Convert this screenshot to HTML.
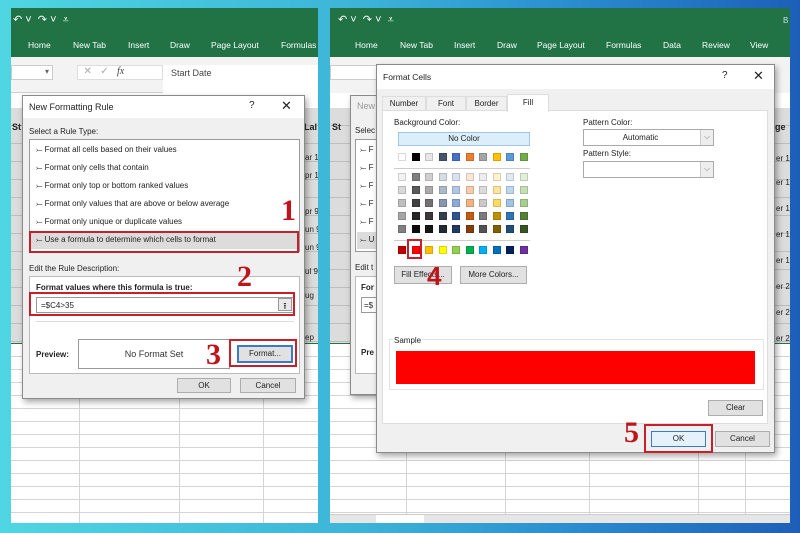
<!DOCTYPE html>
<html><head><meta charset="utf-8"><style>
*{margin:0;padding:0;box-sizing:border-box}
body{width:800px;height:533px;overflow:hidden;position:relative;font-family:"Liberation Sans",sans-serif;font-size:8px;color:#222;
background:linear-gradient(90deg,#4fd6e2 0%,#3cb4d8 45%,#2b8fd0 70%,#1d5fb8 100%)}
.a{position:absolute;white-space:nowrap}
.rib{background:#217346;color:#fff}
.tabs span{position:absolute;top:40px;font-size:8.5px;color:#fff}
.grid{background-image:repeating-linear-gradient(180deg,transparent 0 12px,#d4d4d4 12px 13px)}
.dlg{background:#f0f0f0;border:1px solid #8a8a8a;box-shadow:2px 3px 6px rgba(0,0,0,.35)}
.btn{position:absolute;background:#e1e1e1;border:1px solid #adadad;text-align:center;font-size:8px;line-height:14px;white-space:nowrap}
.red{position:absolute;border:2px solid #c8202a}
.num{position:absolute;font-family:"Liberation Serif",serif;font-weight:bold;color:#c0141c;font-size:30px;line-height:30px}
.li{position:absolute;left:6px;font-size:8px;white-space:nowrap}
.sw{position:absolute;width:8px;height:8px;border:1px solid rgba(0,0,0,.15)}
</style></head><body>

<!-- LEFT PANEL -->
<div class="a" style="left:11px;top:8px;width:307px;height:515px;background:#fff;overflow:hidden">
  <div class="a rib" style="left:0;top:0;width:307px;height:49px">
    <div class="a" style="left:2px;top:5px;font-size:11px">↶ ˅ &nbsp;↷ ˅ &nbsp;⩡</div>
    <div class="tabs"><span style="left:17px;top:32px">Home</span><span style="left:62px;top:32px">New Tab</span><span style="left:117px;top:32px">Insert</span><span style="left:159px;top:32px">Draw</span><span style="left:200px;top:32px">Page Layout</span><span style="left:270px;top:32px">Formulas</span></div>
  </div>
  <div class="a" style="left:0;top:49px;width:307px;height:36px;background:#f3f3f3;border-bottom:1px solid #d0d0d0"></div>
  <div class="a" style="left:0;top:57px;width:42px;height:15px;background:#fff;border:1px solid #ccc"><span style="position:absolute;right:3px;top:1px;color:#666">▾</span></div>
  <div class="a" style="left:66px;top:57px;width:86px;height:15px;background:#fff;border:1px solid #ddd;color:#aaa;font-size:10px">&nbsp;&nbsp;✕ &nbsp; ✓ &nbsp;&nbsp;<i style="color:#444;font-family:'Liberation Serif'">fx</i></div>
  <div class="a" style="left:152px;top:57px;width:155px;height:28px;background:#fff;font-size:9px;padding:3px 8px;color:#444">Start Date</div>
  <div class="a" style="left:0;top:100px;width:307px;height:235px;background:#dcdcdc" ></div>
  <div class="a" style="left:0;top:100px;width:307px;height:235px;background-image:repeating-linear-gradient(180deg,transparent 0 17px,#bdbdbd 17px 18px)"></div>
  <div class="a" style="left:1px;top:114px;font-weight:bold;font-size:9px">St</div>
  <div class="a" style="left:293px;top:114px;font-weight:bold;font-size:9px">Lal</div>
  <div class="a" style="left:294px;top:145px">ar 1</div><div class="a" style="left:294px;top:163px">pr 1</div><div class="a" style="left:294px;top:199px">pr 9</div><div class="a" style="left:294px;top:217px">un 9</div><div class="a" style="left:294px;top:235px">un 9</div><div class="a" style="left:294px;top:259px">ul 9</div><div class="a" style="left:294px;top:283px">ug</div><div class="a" style="left:294px;top:325px">ep</div>
  <div class="a" style="left:0;top:335px;width:307px;height:1px;background:#217346"></div>
  <div class="a grid" style="left:0;top:336px;width:307px;height:179px"></div>
  <div class="a" style="left:68px;top:336px;width:1px;height:179px;background:#d4d4d4"></div>
  <div class="a" style="left:168px;top:336px;width:1px;height:179px;background:#d4d4d4"></div>
  <div class="a" style="left:252px;top:336px;width:1px;height:179px;background:#d4d4d4"></div>
</div>

<!-- New Formatting Rule dialog -->
<div class="a dlg" style="left:22px;top:95px;width:283px;height:304px">
  <div class="a" style="left:0;top:0;width:281px;height:22px;background:#fff"></div>
  <div class="a" style="left:6px;top:6px;font-size:9px">New Formatting Rule</div>
  <div class="a" style="left:226px;top:4px;font-size:10px">?</div>
  <div class="a" style="left:258px;top:2px;font-size:13px">✕</div>
  <div class="a" style="left:6px;top:31px">Select a Rule Type:</div>
  <div class="a" style="left:6px;top:43px;width:271px;height:113px;background:#fff;border:1px solid #999">
    <div class="li" style="top:5px">⤚ Format all cells based on their values</div>
    <div class="li" style="top:23px">⤚ Format only cells that contain</div>
    <div class="li" style="top:41px">⤚ Format only top or bottom ranked values</div>
    <div class="li" style="top:59px">⤚ Format only values that are above or below average</div>
    <div class="li" style="top:77px">⤚ Format only unique or duplicate values</div>
    <div class="a" style="left:1px;top:92px;width:267px;height:17px;background:#dcdcdc"></div>
    <div class="li" style="top:95px">⤚ Use a formula to determine which cells to format</div>
  </div>
  <div class="a" style="left:6px;top:168px">Edit the Rule Description:</div>
  <div class="a" style="left:6px;top:180px;width:271px;height:98px;background:#fff;border:1px solid #bbb">
    <div class="a" style="left:6px;top:6px;font-weight:bold">Format values where this formula is true:</div>
    <div class="a" style="left:6px;top:20px;width:258px;height:16px;border:1px solid #999;padding:3px 4px">=$C4&gt;35</div>
    <div class="a" style="left:248px;top:21px;width:14px;height:13px;background:#e8e8e8;border:1px solid #999;text-align:center;font-size:9px">⭱</div>
    <div class="a" style="left:6px;top:44px;width:258px;height:1px;background:#ddd"></div>
    <div class="a" style="left:6px;top:73px;font-weight:bold">Preview:</div>
    <div class="a" style="left:48px;top:62px;width:152px;height:30px;border:1px solid #999;text-align:center;line-height:28px;font-size:9px;color:#333">No Format Set</div>
    <div class="btn" style="left:207px;top:68px;width:56px;height:18px;border:2px solid #3b7ac8;line-height:14px">Format...</div>
  </div>
  <div class="btn" style="left:154px;top:282px;width:54px;height:15px">OK</div>
  <div class="btn" style="left:217px;top:282px;width:56px;height:15px">Cancel</div>
</div>
<div class="red" style="left:29px;top:231px;width:270px;height:22px"></div>
<div class="red" style="left:29px;top:292px;width:266px;height:24px"></div>
<div class="red" style="left:229px;top:339px;width:68px;height:28px"></div>
<div class="num" style="left:281px;top:196px">1</div>
<div class="num" style="left:237px;top:262px">2</div>
<div class="num" style="left:206px;top:340px">3</div>

<!-- RIGHT PANEL -->
<div class="a" style="left:330px;top:8px;width:460px;height:515px;background:#fff;overflow:hidden">
  <div class="a rib" style="left:0;top:0;width:460px;height:49px">
    <div class="a" style="left:8px;top:5px;font-size:11px">↶ ˅ &nbsp;↷ ˅ &nbsp;⩡</div>
    <div class="a" style="left:453px;top:8px;font-size:8px;color:#cde">B</div>
    <div class="tabs"><span style="left:25px;top:32px">Home</span><span style="left:70px;top:32px">New Tab</span><span style="left:124px;top:32px">Insert</span><span style="left:167px;top:32px">Draw</span><span style="left:207px;top:32px">Page Layout</span><span style="left:276px;top:32px">Formulas</span><span style="left:333px;top:32px">Data</span><span style="left:372px;top:32px">Review</span><span style="left:420px;top:32px">View</span></div>
  </div>
  <div class="a" style="left:0;top:49px;width:460px;height:36px;background:#f3f3f3"></div>
  <div class="a" style="left:0;top:57px;width:50px;height:15px;background:#fff;border:1px solid #ccc"></div>
  <div class="a" style="left:0;top:100px;width:460px;height:235px;background:#dcdcdc"></div>
  <div class="a" style="left:0;top:100px;width:460px;height:235px;background-image:repeating-linear-gradient(180deg,transparent 0 17px,#bdbdbd 17px 18px)"></div>
  <div class="a" style="left:2px;top:114px;font-weight:bold;font-size:9px">St</div>
  <div class="a" style="left:440px;top:114px;font-weight:bold;font-size:9px">age</div>
  <div class="a" style="left:446px;top:146px">er 1</div><div class="a" style="left:446px;top:170px">er 1</div><div class="a" style="left:446px;top:196px">er 1</div><div class="a" style="left:446px;top:222px">er 1</div><div class="a" style="left:446px;top:248px">er 1</div><div class="a" style="left:446px;top:274px">er 2</div><div class="a" style="left:446px;top:300px">er 2</div><div class="a" style="left:446px;top:326px">er 2</div>
  <div class="a" style="left:440px;top:99px;color:#888">F</div>
  <div class="a" style="left:0;top:335px;width:460px;height:1px;background:#217346"></div>
  <div class="a grid" style="left:0;top:336px;width:460px;height:170px"></div>
  <div class="a" style="left:76px;top:336px;width:1px;height:170px;background:#d4d4d4"></div>
  <div class="a" style="left:175px;top:336px;width:1px;height:170px;background:#d4d4d4"></div>
  <div class="a" style="left:259px;top:336px;width:1px;height:170px;background:#d4d4d4"></div>
  <div class="a" style="left:368px;top:336px;width:1px;height:170px;background:#d4d4d4"></div>
  <div class="a" style="left:415px;top:336px;width:1px;height:170px;background:#d4d4d4"></div>
  <div class="a" style="left:0;top:506px;width:460px;height:9px;background:#e6e6e6;border-top:1px solid #ccc"></div>
  <div class="a" style="left:46px;top:507px;width:48px;height:8px;background:#fff"></div>
</div>
<!-- background NFR dialog on right -->
<div class="a dlg" style="left:350px;top:95px;width:40px;height:300px">
  <div class="a" style="left:6px;top:5px;color:#999;font-size:9px">New</div>
  <div class="a" style="left:4px;top:30px">Selec</div>
  <div class="a" style="left:4px;top:43px;width:40px;height:113px;background:#fff;border:1px solid #999">
    <div class="li" style="left:4px;top:5px">⤚ F</div><div class="li" style="left:4px;top:23px">⤚ F</div><div class="li" style="left:4px;top:41px">⤚ F</div><div class="li" style="left:4px;top:59px">⤚ F</div><div class="li" style="left:4px;top:77px">⤚ F</div>
    <div class="a" style="left:1px;top:92px;width:40px;height:17px;background:#dcdcdc"></div><div class="li" style="left:4px;top:95px">⤚ U</div>
  </div>
  <div class="a" style="left:4px;top:167px">Edit t</div>
  <div class="a" style="left:4px;top:180px;width:40px;height:98px;background:#fff;border:1px solid #bbb">
    <div class="a" style="left:5px;top:6px;font-weight:bold">For</div>
    <div class="a" style="left:5px;top:20px;width:30px;height:16px;border:1px solid #999;padding:3px 2px">=$</div>
    <div class="a" style="left:5px;top:71px;font-weight:bold">Pre</div>
  </div>
</div>

<!-- Format Cells dialog -->
<div class="a dlg" style="left:376px;top:64px;width:399px;height:389px;background:#f0f0f0">
  <div class="a" style="left:0;top:0;width:397px;height:24px;background:#fff"></div>
  <div class="a" style="left:6px;top:7px;font-size:8.5px">Format Cells</div>
  <div class="a" style="left:345px;top:5px;font-size:10px">?</div>
  <div class="a" style="left:376px;top:3px;font-size:13px">✕</div>
  <div class="a" style="left:5px;top:45px;width:386px;height:314px;background:#fff;border:1px solid #ddd"></div>
  <div class="a" style="left:5px;top:31px;width:44px;height:15px;border:1px solid #ddd;background:#f0f0f0;text-align:center;line-height:14px">Number</div>
  <div class="a" style="left:49px;top:31px;width:40px;height:15px;border:1px solid #ddd;background:#f0f0f0;text-align:center;line-height:14px">Font</div>
  <div class="a" style="left:89px;top:31px;width:41px;height:15px;border:1px solid #ddd;background:#f0f0f0;text-align:center;line-height:14px">Border</div>
  <div class="a" style="left:130px;top:29px;width:42px;height:18px;border:1px solid #ddd;border-bottom:none;background:#fff;text-align:center;line-height:16px">Fill</div>
  <div class="a" style="left:17px;top:53px">Background Color:</div>
  <div class="a" style="left:21px;top:67px;width:132px;height:14px;background:#ddeefb;border:1px solid #9cc7ea;text-align:center;line-height:12px">No Color</div>
  <div class="a" style="left:17px;top:103px;width:136px;height:1px;background:#ccc"></div>
  <div class="a" style="left:17px;top:175px;width:136px;height:1px;background:#ccc"></div>
  <div class="btn" style="left:17px;top:201px;width:58px;height:18px;line-height:16px">Fill Effects...</div>
  <div class="btn" style="left:83px;top:201px;width:67px;height:18px;line-height:16px">More Colors...</div>
  <div class="a" style="left:206px;top:53px">Pattern Color:</div>
  <div class="a" style="left:206px;top:64px;width:131px;height:17px;background:#fff;border:1px solid #aaa;text-align:center;line-height:15px;padding-right:16px">Automatic</div>
  <div class="a" style="left:323px;top:65px;width:13px;height:15px;background:#eee;border-left:1px solid #ccc;color:#777;text-align:center;line-height:13px">⌵</div>
  <div class="a" style="left:206px;top:84px">Pattern Style:</div>
  <div class="a" style="left:206px;top:96px;width:131px;height:17px;background:#fff;border:1px solid #aaa"></div>
  <div class="a" style="left:323px;top:97px;width:13px;height:15px;background:#eee;border-left:1px solid #ccc;color:#777;text-align:center;line-height:13px">⌵</div>
  <div class="a" style="left:12px;top:274px;width:375px;height:51px;border:1px solid #e3e3e3"></div>
  <div class="a" style="left:16px;top:271px;background:#fff;padding:0 1px">Sample</div>
  <div class="a" style="left:19px;top:286px;width:359px;height:33px;background:#ff0000"></div>
  <div class="btn" style="left:331px;top:335px;width:55px;height:16px">Clear</div>
  <div class="btn" style="left:274px;top:366px;width:55px;height:16px;border:1px solid #3b7ac8;background:#e5f1fb">OK</div>
  <div class="btn" style="left:338px;top:366px;width:55px;height:16px">Cancel</div>
</div>

<!-- swatches -->
<div id="sw">
<div class="sw" style="left:398px;top:153px;background:#fff"></div><div class="sw" style="left:411.5px;top:153px;background:#000"></div><div class="sw" style="left:425px;top:153px;background:#e7e6e6"></div><div class="sw" style="left:438.5px;top:153px;background:#44546a"></div><div class="sw" style="left:452px;top:153px;background:#4472c4"></div><div class="sw" style="left:465.5px;top:153px;background:#ed7d31"></div><div class="sw" style="left:479px;top:153px;background:#a5a5a5"></div><div class="sw" style="left:492.5px;top:153px;background:#ffc000"></div><div class="sw" style="left:506px;top:153px;background:#5b9bd5"></div><div class="sw" style="left:519.5px;top:153px;background:#70ad47"></div>

<div class="sw" style="left:398px;top:173px;background:#f2f2f2"></div><div class="sw" style="left:411.5px;top:173px;background:#7f7f7f"></div><div class="sw" style="left:425px;top:173px;background:#d0cece"></div><div class="sw" style="left:438.5px;top:173px;background:#d6dce4"></div><div class="sw" style="left:452px;top:173px;background:#d9e2f3"></div><div class="sw" style="left:465.5px;top:173px;background:#fbe5d5"></div><div class="sw" style="left:479px;top:173px;background:#ededed"></div><div class="sw" style="left:492.5px;top:173px;background:#fff2cc"></div><div class="sw" style="left:506px;top:173px;background:#deebf6"></div><div class="sw" style="left:519.5px;top:173px;background:#e2efd9"></div>

<div class="sw" style="left:398px;top:186px;background:#d9d9d9"></div><div class="sw" style="left:411.5px;top:186px;background:#595959"></div><div class="sw" style="left:425px;top:186px;background:#aeaaaa"></div><div class="sw" style="left:438.5px;top:186px;background:#adb9ca"></div><div class="sw" style="left:452px;top:186px;background:#b4c6e7"></div><div class="sw" style="left:465.5px;top:186px;background:#f7cbac"></div><div class="sw" style="left:479px;top:186px;background:#dbdbdb"></div><div class="sw" style="left:492.5px;top:186px;background:#ffe599"></div><div class="sw" style="left:506px;top:186px;background:#bdd7ee"></div><div class="sw" style="left:519.5px;top:186px;background:#c5e0b3"></div>

<div class="sw" style="left:398px;top:199px;background:#bfbfbf"></div><div class="sw" style="left:411.5px;top:199px;background:#404040"></div><div class="sw" style="left:425px;top:199px;background:#757171"></div><div class="sw" style="left:438.5px;top:199px;background:#8496b0"></div><div class="sw" style="left:452px;top:199px;background:#8eaadb"></div><div class="sw" style="left:465.5px;top:199px;background:#f4b183"></div><div class="sw" style="left:479px;top:199px;background:#c9c9c9"></div><div class="sw" style="left:492.5px;top:199px;background:#ffd966"></div><div class="sw" style="left:506px;top:199px;background:#9dc3e6"></div><div class="sw" style="left:519.5px;top:199px;background:#a8d08d"></div>

<div class="sw" style="left:398px;top:212px;background:#a6a6a6"></div><div class="sw" style="left:411.5px;top:212px;background:#262626"></div><div class="sw" style="left:425px;top:212px;background:#3a3838"></div><div class="sw" style="left:438.5px;top:212px;background:#333f4f"></div><div class="sw" style="left:452px;top:212px;background:#2f5496"></div><div class="sw" style="left:465.5px;top:212px;background:#c55a11"></div><div class="sw" style="left:479px;top:212px;background:#7b7b7b"></div><div class="sw" style="left:492.5px;top:212px;background:#bf9000"></div><div class="sw" style="left:506px;top:212px;background:#2e75b5"></div><div class="sw" style="left:519.5px;top:212px;background:#538135"></div>

<div class="sw" style="left:398px;top:225px;background:#808080"></div><div class="sw" style="left:411.5px;top:225px;background:#0d0d0d"></div><div class="sw" style="left:425px;top:225px;background:#171616"></div><div class="sw" style="left:438.5px;top:225px;background:#222a35"></div><div class="sw" style="left:452px;top:225px;background:#1f3864"></div><div class="sw" style="left:465.5px;top:225px;background:#843c0c"></div><div class="sw" style="left:479px;top:225px;background:#525252"></div><div class="sw" style="left:492.5px;top:225px;background:#7f6000"></div><div class="sw" style="left:506px;top:225px;background:#1e4e79"></div><div class="sw" style="left:519.5px;top:225px;background:#375623"></div>

<div class="sw" style="left:398px;top:246px;background:#c00000"></div><div class="sw" style="left:411.5px;top:246px;background:#ff0000"></div><div class="sw" style="left:425px;top:246px;background:#ffc000"></div><div class="sw" style="left:438.5px;top:246px;background:#ffff00"></div><div class="sw" style="left:452px;top:246px;background:#92d050"></div><div class="sw" style="left:465.5px;top:246px;background:#00b050"></div><div class="sw" style="left:479px;top:246px;background:#00b0f0"></div><div class="sw" style="left:492.5px;top:246px;background:#0070c0"></div><div class="sw" style="left:506px;top:246px;background:#002060"></div><div class="sw" style="left:519.5px;top:246px;background:#7030a0"></div>
</div>
<div class="red" style="left:407px;top:239px;width:15px;height:20px"></div>
<div class="num" style="left:427px;top:261px;font-family:'Liberation Sans',sans-serif;font-size:26px">4</div>
<div class="red" style="left:644px;top:424px;width:69px;height:29px"></div>
<div class="num" style="left:624px;top:418px">5</div>
</body></html>
